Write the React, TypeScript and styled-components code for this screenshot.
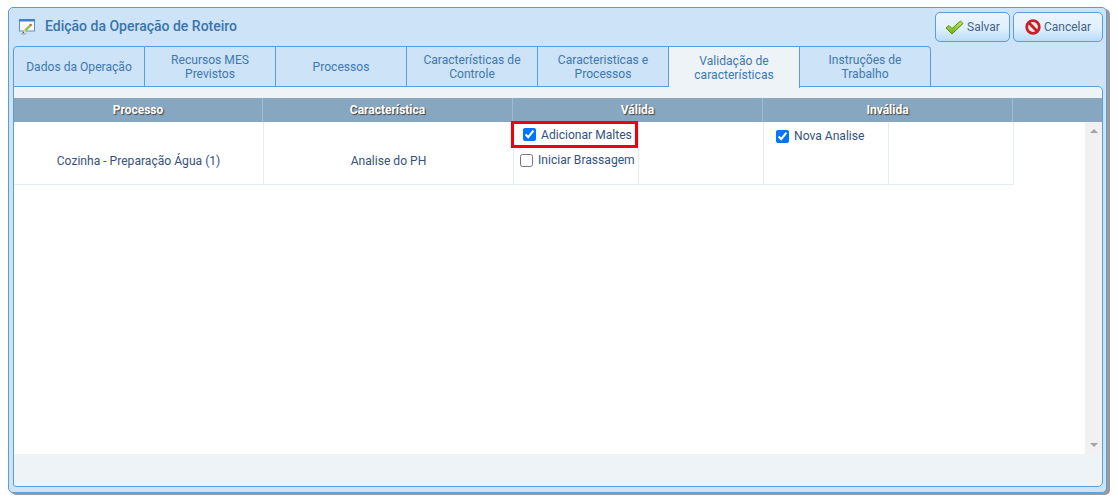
import React from 'react'
import styled, { createGlobalStyle } from 'styled-components'

const GlobalStyle = createGlobalStyle`
    html, body {
        margin: 0;
        padding: 0;
        background: #fff;
        font-family: Roboto, "Liberation Sans", sans-serif;
    }
`

const Page = styled.div`
    width: 1118px;
    height: 503px;
    padding: 7px 0 0 8px;
    box-sizing: border-box;
    overflow: hidden;
`

const DialogWindow = styled.div`
    width: 1099px;
    height: 486px;
    box-sizing: border-box;
    padding: 0 3px 5px 4px;
    display: flex;
    flex-direction: column;
    background: #cde3f7;
    border: 1px solid #5b9ddc;
    border-radius: 5px;
    box-shadow: 3px 2px 0 #9a9a9a;
`

const TitleBar = styled.div`
    height: 38px;
    flex: none;
    display: flex;
    align-items: center;
    justify-content: space-between;
`

const Title = styled.h1`
    margin: 0;
    display: flex;
    align-items: center;
    gap: 9px;
    padding: 0 0 2px 5px;
    font-size: 14px;
    font-weight: 500;
    color: #3a74ab;
`

const Actions = styled.div`
    display: flex;
    gap: 3px;
`

const ActionButton = styled.button<{ $width: number }>`
    width: ${(p) => p.$width}px;
    height: 30px;
    box-sizing: border-box;
    padding: 0;
    display: flex;
    align-items: center;
    justify-content: center;
    gap: 3px;
    border: 1px solid #5b9ddc;
    border-radius: 5px;
    background: linear-gradient(#eaf5fe, #e0f0fd 55%, #b9dcf7);
    font-family: inherit;
    font-size: 12px;
    color: #44638c;
`

const TabStrip = styled.div`
    display: flex;
    flex: none;
    height: 41px;
`

const Tab = styled.div<{ $active?: boolean }>`
    width: 131px;
    height: ${(p) => (p.$active ? 42 : 41)}px;
    box-sizing: border-box;
    flex: none;
    display: flex;
    align-items: center;
    justify-content: center;
    text-align: center;
    line-height: 14px;
    padding: 0 6px;
    font-size: 12.1px;
    color: #3f78af;
    background: ${(p) => (p.$active ? '#eef3f8' : '#cde3f7')};
    border: 1px solid #5b9ddc;
    border-left-width: 0;
    border-bottom: ${(p) => (p.$active ? 'none' : '1px solid #5b9ddc')};
    position: relative;
    z-index: 1;

    &:first-child {
        width: 132px;
        border-left-width: 1px;
        border-top-left-radius: 4px;
    }
    &:last-child {
        border-top-right-radius: 4px;
    }
`

const Panel = styled.div`
    flex: 1;
    margin-top: -1px;
    box-sizing: border-box;
    padding: 11px 0 32px;
    display: flex;
    flex-direction: column;
    background: #eef3f8;
    border: 1px solid #5b9ddc;
    border-radius: 0 5px 5px 3px;
`

const HeaderRow = styled.div`
    display: flex;
    flex: none;
    height: 24px;
    background: #87a7c0;
`

const HeaderCell = styled.div<{ $width: number }>`
    width: ${(p) => p.$width}px;
    box-sizing: border-box;
    flex: none;
    display: flex;
    align-items: center;
    justify-content: center;
    border-right: 1px solid #a3bbce;
    font-size: 12px;
    font-weight: 700;
    color: #fff;
    text-shadow: 1px 1px 1px #404040;

    &:last-child {
        flex: 1;
        border-right: none;
    }
`

const GridBody = styled.div`
    flex: 1;
    display: flex;
    min-height: 0;
    background: #fff;
`

const RowList = styled.div`
    flex: 1;
    min-width: 0;
`

const DataRow = styled.div`
    display: flex;
    width: 1000px;
    height: 63px;
    box-sizing: border-box;
    border-bottom: 1px solid #e3ebf3;
`

const TextCell = styled.div<{ $width: number }>`
    width: ${(p) => p.$width}px;
    flex: none;
    box-sizing: border-box;
    display: flex;
    align-items: center;
    justify-content: center;
    padding-top: 15px;
    border-right: 1px solid #e3ebf3;
    font-size: 12.1px;
    color: #34527f;
`

const OptionCell = styled.div`
    width: 125px;
    flex: none;
    box-sizing: border-box;
    padding-top: 1px;
    border-right: 1px solid #e3ebf3;
    position: relative;
`

const OptionLabel = styled.label<{ $indent: number; $height: number }>`
    display: flex;
    align-items: center;
    gap: 5px;
    height: ${(p) => p.$height}px;
    padding-left: ${(p) => p.$indent}px;
    font-size: 12.1px;
    color: #34527f;
    white-space: nowrap;
`

const OptionBox = styled.input`
    width: 13px;
    height: 13px;
    margin: 0;
    flex: none;
`

const Highlight = styled.div`
    position: absolute;
    left: -3px;
    top: -1px;
    width: 127px;
    height: 27px;
    box-sizing: border-box;
    border: 3px solid #f00008;
    pointer-events: none;
`

const ScrollTrack = styled.div`
    width: 17px;
    flex: none;
    display: flex;
    flex-direction: column;
    justify-content: space-between;
    align-items: center;
    padding: 7px 0;
    box-sizing: border-box;
    background: #f1f1f1;
`

const ScrollArrow = styled.div<{ $up?: boolean }>`
    width: 0;
    height: 0;
    border-left: 4px solid transparent;
    border-right: 4px solid transparent;
    border-top: ${(p) => (p.$up ? 'none' : '4px solid #a3a3a3')};
    border-bottom: ${(p) => (p.$up ? '4px solid #a3a3a3' : 'none')};
`

const EditIcon = () => (
    <svg width="18" height="17" viewBox="0 0 18 17">
        <rect x="1.500" y="1.500" width="15" height="11.500" fill="#fdfdfd" stroke="#5f8fc0" />
        <rect x="1" y="1" width="16" height="2.500" fill="#3f80cc" />
        <path d="M3 15.500h6l-2 1H3.500z" fill="#777" opacity="0.7" />
        <path d="M12.500 5.500l1.800 1.500-1.200 1.300-1.900-1.500z" fill="#e0483a" />
        <path d="M11.200 6.800l1.900 1.500-5 5-1.900-1.500z" fill="#8cc63f" />
        <path d="M6.200 11.800l1.900 1.500-3.300 1.700z" fill="#f2d9a0" />
        <path d="M5.200 13.600l1 .9-1.700.7z" fill="#222" />
    </svg>
)

const CheckIcon = () => (
    <svg width="19" height="15" viewBox="0 0 19 15">
        <defs>
            <linearGradient id="checkFill" x1="0" y1="0" x2="0" y2="1">
                <stop offset="0" stopColor="#c4e84e" />
                <stop offset="1" stopColor="#6cb01c" />
            </linearGradient>
        </defs>
        <path d="M1 8l3-2.500 3 3L15.500 1 18 3.500 7 14z" fill="url(#checkFill)" stroke="#4f8a17" strokeWidth="1" strokeLinejoin="round" />
    </svg>
)

const CancelIcon = () => (
    <svg width="16" height="16" viewBox="0 0 16 16">
        <circle cx="8" cy="8" r="6.300" fill="#f6e6e6" stroke="#c8202a" strokeWidth="2.800" />
        <path d="M3.600 3.600l8.800 8.800" stroke="#c8202a" strokeWidth="2.800" />
    </svg>
)

const tabs = [
    'Dados da Operação',
    'Recursos MES Previstos',
    'Processos',
    'Características de Controle',
    'Caracteristicas e Processos',
    'Validação de características',
    'Instruções de Trabalho',
]

const columns = [
    { name: 'Processo', width: 249 },
    { name: 'Característica', width: 250 },
    { name: 'Válida', width: 250 },
    { name: 'Inválida', width: 250 },
    { name: '', width: 0 },
]

const App: React.FC = () => {
    return (
        <Page>
            <GlobalStyle />
            <DialogWindow>
                <TitleBar>
                    <Title><EditIcon />Edição da Operação de Roteiro</Title>
                    <Actions>
                        <ActionButton $width={75}><CheckIcon />Salvar</ActionButton>
                        <ActionButton $width={90}><CancelIcon />Cancelar</ActionButton>
                    </Actions>
                </TitleBar>

                <TabStrip>
                    {tabs.map((tab) => (
                        <Tab key={tab} $active={tab.startsWith('Validação')}>{tab}</Tab>
                    ))}
                </TabStrip>

                <Panel>
                    <HeaderRow>
                        {columns.map((col) => (
                            <HeaderCell key={col.name} $width={col.width}>{col.name}</HeaderCell>
                        ))}
                    </HeaderRow>
                    <GridBody>
                        <RowList>
                            <DataRow>
                                <TextCell $width={250}>Cozinha - Preparação Água (1)</TextCell>
                                <TextCell $width={250}>Analise do PH</TextCell>
                                <OptionCell>
                                    <Highlight />
                                    <OptionLabel $indent={9} $height={23}>
                                        <OptionBox type="checkbox" defaultChecked />Adicionar Maltes
                                    </OptionLabel>
                                    <OptionLabel $indent={6} $height={28}>
                                        <OptionBox type="checkbox" />Iniciar Brassagem
                                    </OptionLabel>
                                </OptionCell>
                                <OptionCell />
                                <OptionCell>
                                    <OptionLabel $indent={12} $height={26}>
                                        <OptionBox type="checkbox" defaultChecked />Nova Analise
                                    </OptionLabel>
                                </OptionCell>
                                <OptionCell />
                            </DataRow>
                        </RowList>
                        <ScrollTrack>
                            <ScrollArrow $up />
                            <ScrollArrow />
                        </ScrollTrack>
                    </GridBody>
                </Panel>
            </DialogWindow>
        </Page>
    )
}

export default App
